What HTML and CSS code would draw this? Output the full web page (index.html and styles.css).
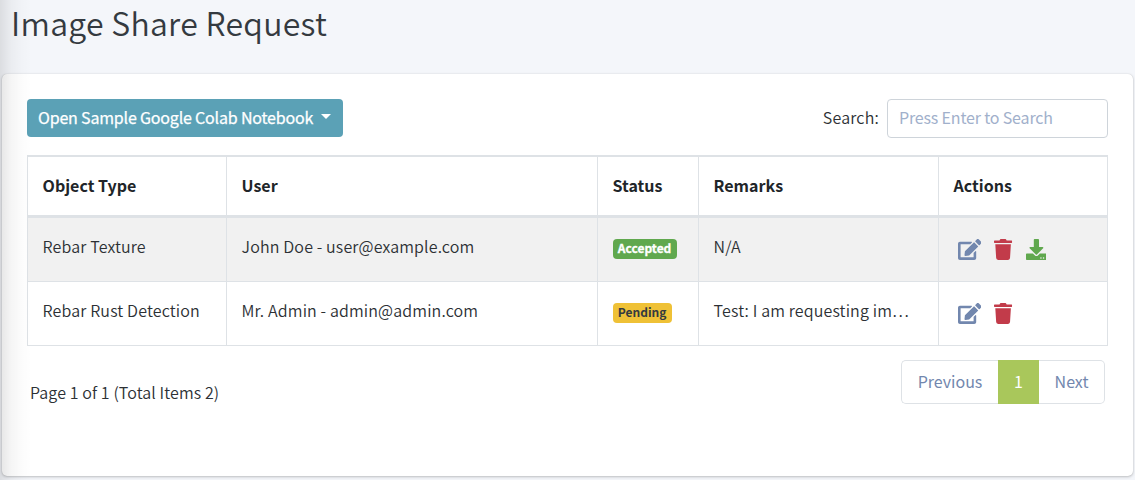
FILE: index.html
```html
<!DOCTYPE html>
<html lang="en">
<head>
<meta charset="utf-8">
<title>Image Share Request</title>
<link rel="stylesheet" href="styles.css">
</head>
<body>
<svg class="sprite" aria-hidden="true">
  <symbol id="edit" viewBox="0 0 576 512"><path d="M402.6 83.2l90.2 90.2c3.8 3.8 3.8 10 0 13.8L274.4 405.6l-92.8 10.3c-12.4 1.4-22.9-9.1-21.5-21.5l10.3-92.8L388.8 83.2c3.8-3.8 10-3.8 13.8 0zm162-22.9l-48.8-48.8c-15.2-15.2-39.9-15.2-55.2 0l-35.4 35.4c-3.8 3.8-3.8 10 0 13.8l90.2 90.2c3.8 3.8 10 3.8 13.8 0l35.4-35.4c15.2-15.3 15.2-40 0-55.2zM384 346.2V448H64V128h229.8c3.2 0 6.2-1.3 8.5-3.5l40-40c7.6-7.6 2.2-20.5-8.5-20.5H48C21.5 64 0 85.5 0 112v352c0 26.5 21.5 48 48 48h352c26.5 0 48-21.5 48-48V306.2c0-10.7-12.9-16-20.5-8.5l-40 40c-2.2 2.3-3.5 5.3-3.5 8.5z"/></symbol>
  <symbol id="trash" viewBox="0 0 448 512"><path d="M432 32H312l-9.4-18.7A24 24 0 0 0 281.1 0H166.8a23.72 23.72 0 0 0-21.4 13.3L136 32H16A16 16 0 0 0 0 48v32a16 16 0 0 0 16 16h416a16 16 0 0 0 16-16V48a16 16 0 0 0-16-16zM53.2 467a48 48 0 0 0 47.9 45h245.8a48 48 0 0 0 47.9-45L416 128H32z"/></symbol>
  <symbol id="download" viewBox="0 0 512 512"><path d="M216 0h80c13.3 0 24 10.7 24 24v168h87.7c17.8 0 26.7 21.5 14.1 34.1L269.7 378.3c-7.5 7.5-19.8 7.5-27.3 0L90.1 226.1c-12.6-12.6-3.7-34.1 14.1-34.1H192V24c0-13.3 10.7-24 24-24zm296 376v112c0 13.3-10.7 24-24 24H24c-13.3 0-24-10.7-24-24V376c0-13.3 10.7-24 24-24h146.7l49 49c20.1 20.1 52.5 20.1 72.6 0l49-49H488c13.3 0 24 10.7 24 24zm-124 88c0-11-9-20-20-20s-20 9-20 20 9 20 20 20 20-9 20-20zm64 0c0-11-9-20-20-20s-20 9-20 20 9 20 20 20 20-9 20-20z"/></symbol>
</svg>
<main class="page">
  <h1 class="title"><span>Image Share Request</span></h1>
  <section class="card">
    <div class="toolbar">
      <button class="dropdown"><span>Open Sample Google Colab Notebook</span><i class="caret"></i></button>
      <label class="search"><span class="search-label">Search:</span><input class="search-input" type="text" placeholder="Press Enter to Search"></label>
    </div>
    <table class="table">
      <colgroup><col class="c-type"><col class="c-user"><col class="c-status"><col class="c-remarks"><col class="c-actions"></colgroup>
      <thead>
        <tr><th><span>Object Type</span></th><th><span>User</span></th><th><span>Status</span></th><th><span>Remarks</span></th><th><span>Actions</span></th></tr>
      </thead>
      <tbody>
        <tr class="odd">
          <td><span>Rebar Texture</span></td><td><span>John Doe - user@example.com</span></td>
          <td><span class="badge accepted">Accepted</span></td><td><span>N/A</span></td>
          <td><div class="actions">
            <svg class="icon edit"><use href="#edit"/></svg>
            <svg class="icon trash"><use href="#trash"/></svg>
            <svg class="icon download"><use href="#download"/></svg>
          </div></td>
        </tr>
        <tr>
          <td><span>Rebar Rust Detection</span></td><td><span>Mr. Admin - admin@admin.com</span></td>
          <td><span class="badge pending">Pending</span></td><td><span>Test: I am requesting im…</span></td>
          <td><div class="actions">
            <svg class="icon edit"><use href="#edit"/></svg>
            <svg class="icon trash"><use href="#trash"/></svg>
          </div></td>
        </tr>
      </tbody>
    </table>
    <div class="footer">
      <span class="summary">Page 1 of 1 (Total Items 2)</span>
      <nav class="pagination"><a class="prev">Previous</a><a class="current">1</a><a class="next">Next</a></nav>
    </div>
  </section>
</main>
<div class="edge-shadow"></div>
</body>
</html>
```
FILE: styles.css
```css
* { box-sizing: border-box; }
body {
  margin: 0;
  height: 480px;
  overflow: hidden;
  background: #f4f6fa;
  color: #2c3034;
  font: 350 16px/24px "Noto Sans CJK JP", "Noto Sans", sans-serif;
  letter-spacing: .14px;
}
.sprite { display: none; }
.page { padding: 0 2px; }
.title {
  margin: 0;
  height: 74px;
  padding: 1px 0 0 9px;
  color: #343a40;
  font-size: 32px;
  line-height: 42px;
  font-weight: 350;
  letter-spacing: .28px;
}
.card {
  height: 402px;
  padding: 25px;
  background: #fff;
  border-radius: 5px;
  box-shadow: 0 0 1px rgba(0,0,0,.18), 0 1px 3px rgba(0,0,0,.22);
}
.toolbar { display: flex; justify-content: space-between; height: 39px; }
.dropdown {
  display: flex;
  align-items: center;
  gap: 8px;
  width: 316px;
  height: 38px;
  padding: 0 11px 2px;
  border: 0;
  border-radius: 4px;
  background: #5ba1b6;
  color: #fff;
  font: inherit;
  font-weight: 400;
  letter-spacing: -.19px;
  white-space: nowrap;
  -webkit-text-stroke: .25px #fff;
}
.caret { margin-bottom: 2px; border: 5px solid transparent; border-top-color: #fff; border-bottom: 0; }
.search { display: flex; align-items: center; gap: 8px; }
.search-label { padding-bottom: 3px; letter-spacing: .2px; }
.search-input {
  width: 221px;
  height: 39px;
  padding: 0 11px 3px;
  border: 1px solid #ced4da;
  border-radius: 4px;
  font: inherit;
  font-weight: 400;
  letter-spacing: -.17px;
}
.search-input::placeholder { color: #a1b0cb; opacity: 1; }
.table {
  width: 1081px;
  margin-top: 17px;
  table-layout: fixed;
  border-collapse: separate;
  border-spacing: 0;
  border-top: 2px solid #dee2e6;
  border-left: 1px solid #dee2e6;
}
.c-type { width: 199px; }
.c-user { width: 371px; }
.c-status { width: 101px; }
.c-remarks { width: 240px; }
.c-actions { width: 169px; }
th, td {
  height: 64px;
  padding: 16px 14px 0 14.6px;
  border-right: 1px solid #dee2e6;
  border-bottom: 1px solid #dee2e6;
  text-align: left;
  vertical-align: top;
  white-space: nowrap;
}
th { height: 61px; border-bottom-width: 3px; color: #212529; font-weight: 700; letter-spacing: 0; }
.odd { background: #f1f1f1; }
.badge {
  display: block;
  width: 64px;
  height: 20px;
  margin-top: 5px;
  border-radius: 4px;
  font-size: 12px;
  line-height: 18px;
  font-weight: 700;
  letter-spacing: 0;
  text-align: center;
}
.accepted { background: #60a84e; color: #fff; -webkit-text-stroke: .3px #fff; }
.pending { width: 59px; background: #efc136; color: #343a40; }
.actions { display: flex; gap: 13px; padding: 5px 0 0 4.4px; }
.icon { height: 21px; fill: currentColor; }
.edit { width: 23.4px; color: #7287ae; }
.trash { width: 18.2px; color: #c23b4a; }
.download { width: 20.8px; color: #60a84e; }
.footer { display: flex; justify-content: space-between; padding: 14px 3px 0; }
.summary { padding-top: 20px; letter-spacing: .1px; }
.pagination { display: flex; height: 44px; line-height: 40px; font-weight: 400; letter-spacing: 0; color: #7287ae; text-align: center; }
.pagination a { border: 1px solid #dee2e6; }
.prev { width: 97px; border-radius: 5px 0 0 5px; }
.pagination .current { width: 41px; background: #a9c75b; border-color: #a9c75b; color: #fff; }
.next { width: 66px; border-radius: 0 5px 5px 0; }
.pagination .prev { border-right: 0; }
.pagination .next { border-left: 0; }
.edge-shadow {
  position: absolute;
  left: 0;
  top: 0;
  width: 32px;
  height: 480px;
  background: linear-gradient(90deg, rgba(0,0,0,.1), rgba(0,0,0,.04) 35%, rgba(0,0,0,.012) 70%, transparent);
  pointer-events: none;
}
```
